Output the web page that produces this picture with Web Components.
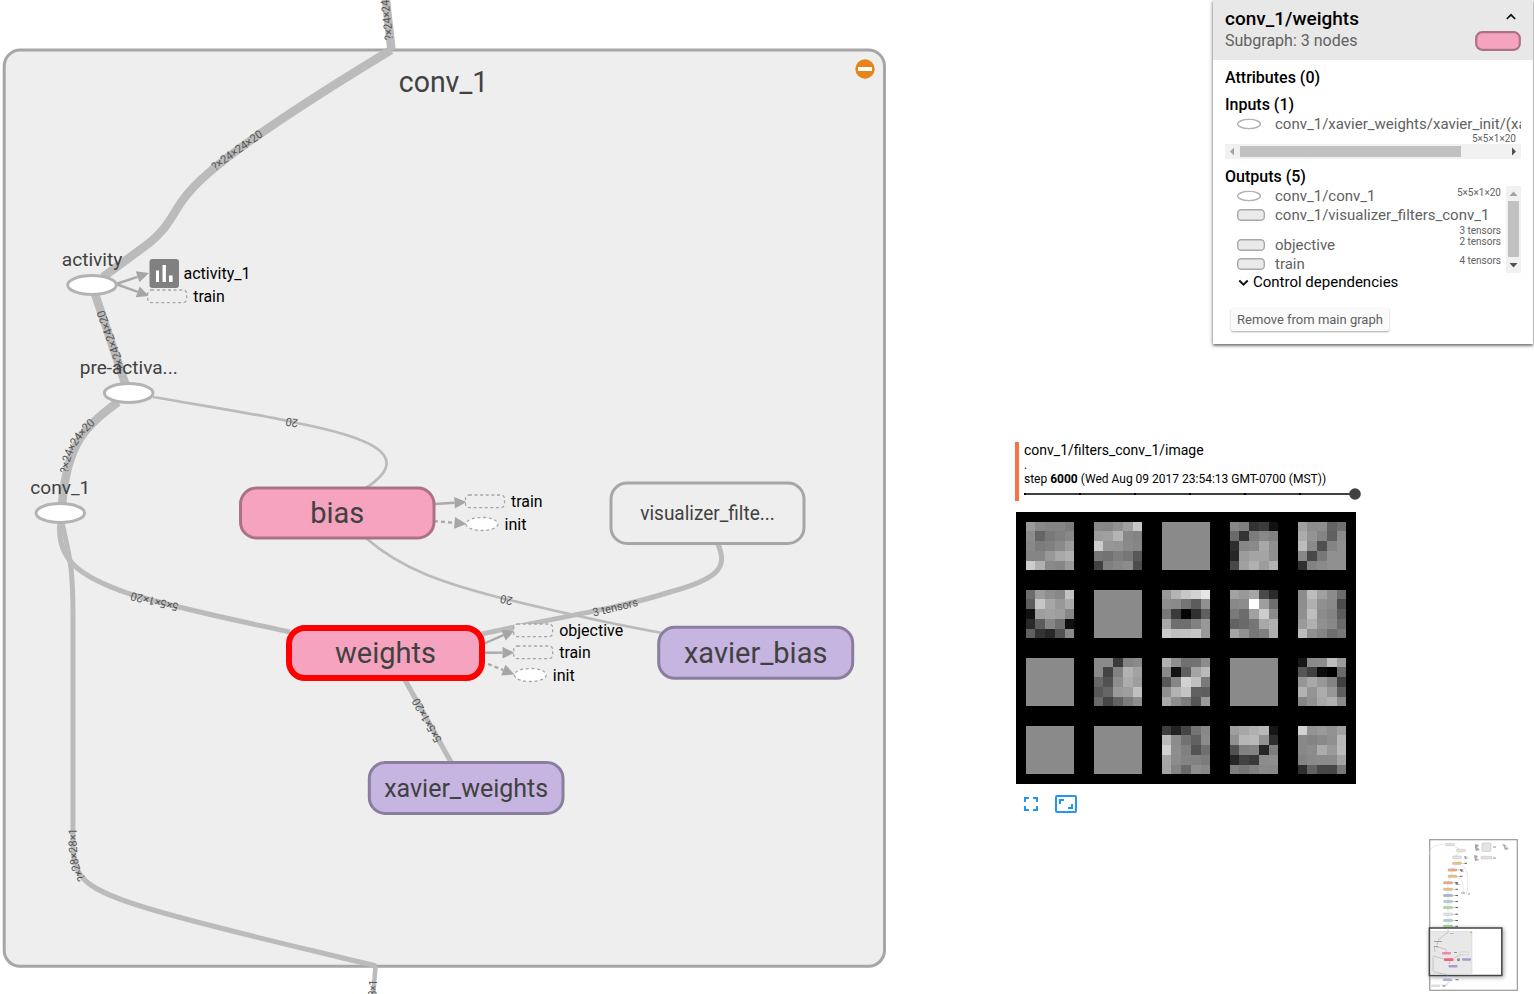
<!DOCTYPE html>
<html lang="en">
<head>
<meta charset="utf-8">
<title>Graph explorer</title>
<style>
html,body{margin:0;height:100%;overflow:hidden;background:#fff}
body{font-family:Roboto,"Liberation Sans",sans-serif;color:#000}
</style>
</head>
<body>
<graph-app></graph-app>
<script>
const define = (name, html) => customElements.define(name, class extends HTMLElement {
  constructor(){ super(); this.attachShadow({mode:'open'}); }
  connectedCallback(){
    if (this.shadowRoot.childNodes.length) return;
    const t = document.createElement('template');
    t.innerHTML = typeof html === 'function' ? html(this) : html;
    this.shadowRoot.append(t.content.cloneNode(true));
  }
});

/* ---------- main graph canvas ---------- */
const fit = len => `textLength="${len}" lengthAdjust="spacingAndGlyphs"`;
const edge = (id, d, w) => `<path id="${id}" class="edge" d="${d}" stroke-width="${w}"/>`;
const op = (x, y, name, ty, len) => `<ellipse class="op" cx="${x}" cy="${y}" rx="24.3" ry="9.5"/><text class="opname" x="${x}" y="${ty}" ${fit(len)}>${name}</text>`;
const group = (x, y, w, h, cls, name, fs, ty, len) => `<rect class="${cls}" x="${x}" y="${y}" width="${w}" height="${h}" rx="16"/><text class="gname" style="font-size:${fs}px" x="${x + w/2}" y="${ty}" ${fit(len)}>${name}</text>`;
const aRect = (x, y, name, len) => `<rect class="anno" x="${x}" y="${y}" width="39" height="12.6" rx="3.5"/><text class="aname" x="${x+45.5}" y="${y+12}" ${fit(len)}>${name}</text>`;
const aOval = (x, y, name, len) => `<ellipse class="anno oval" cx="${x}" cy="${y}" rx="16" ry="6.5"/><text class="aname" x="${x+22.5}" y="${y+6}" ${fit(len)}>${name}</text>`;
const arrow = (x1, y1, x2, y2, dash) => {
  const a = Math.atan2(y2-y1, x2-x1), c = Math.cos(a), s = Math.sin(a), bx = x2-12*c, by = y2-12*s;
  return `<path class="aline" d="M${x1} ${y1}L${bx} ${by}" ${dash ? 'stroke-dasharray="4 3"' : ''}/><path fill="#a6a6a6" d="M${x2} ${y2}L${bx-5.8*s} ${by+5.8*c}L${bx+5.8*s} ${by-5.8*c}Z"/>`;
};
const flow = (id, d, text, len) => `<path id="${id}" d="${d}" fill="none"/><text class="elabel" dy="3.6"><textPath href="#${id}" ${fit(len)}>${text}</textPath></text>`;

define('graph-scene', `
<style>
:host{display:block;width:1000px;height:994px}
svg{display:block}
text{font-family:Roboto,"Liberation Sans",sans-serif}
.edge{fill:none;stroke:#bbb}
.op{fill:#fff;stroke:#b3b3b3;stroke-width:3}
.opname{font-size:19px;fill:#414141;text-anchor:middle}
.gname{fill:#414141;text-anchor:middle}
.pink{fill:#f5a3bf;stroke:#ab7286;stroke-width:3}
.sel{fill:#f5a3bf;stroke:#f00;stroke-width:6}
.violet{fill:#c5b5e0;stroke:#897e9e;stroke-width:3}
.plain{fill:#eee;stroke:#a6a6a6;stroke-width:3}
.anno{fill:#eee;stroke:#a6a6a6;stroke-width:1.3;stroke-dasharray:3 2.6}
.oval{fill:#fff}
.aname{font-size:16px;fill:#000}
.aline{stroke:#aaa;stroke-width:2.4;fill:none}
.elabel{font-size:11.5px;fill:#555}
</style>
<svg width="1000" height="994" viewBox="0 0 1000 994">
<rect x="4.2" y="50" width="880.3" height="916.3" rx="16" fill="#eee" stroke="#a6a6a6" stroke-width="3"/>
${edge('e0','M385.500 -4L391.500 50',8.500)}
${edge('e1','M391 50C310 99 255 135 218 165C166 207 182 216 148 244L103 277',8.500)}
${edge('e2','M95 294L125 383',8.500)}
${edge('e3','M118 402C88 425 67 440 62 505',8.500)}
${edge('e4','M153 397C211 407 268 416 297 423C363 436 418 454 366 488',2.700)}
${edge('e5','M366 538C402 570 447 584 501 598C550 610 600 622 662 633',2.700)}
${edge('e6','M718 544C727 566 722 578 670 592C618 609 548 619 482 634',5)}
${edge('e7','M60 522C56 560 80 577 130 594C180 609 235 620 290 632',5)}
${edge('e8','M62 522C69 557 73 560 73 620L73 840C73 876 79 888 150 909C210 927 290 945 376 966',5)}
${edge('e9','M375.500 966L373 998',4.500)}
${edge('e10','M405 680L451 762',5)}
<text class="gname" style="font-size:29.500px" x="443.500" y="92" ${fit(89.5)}>conv_1</text>
<circle cx="865" cy="69" r="9.700" fill="#e6841a"/><rect x="858" y="67" width="14" height="4" fill="#fff"/>
${flow('t0','M389.500 40L383 -19','?×24×24×20',58)}
${flow('t1','M213 168C229 156 245 145 263 132','?×24×24×20',60)}
${flow('t2','M122 370L99 306','?×24×24×20',63)}
${flow('t3','M64.500 473C67 449 76 437 95 419','?×24×24×20',61)}
${flow('t4','M298 423L280 420','20',12.500)}
${flow('t5','M512.500 601L495 597','20',12.500)}
${flow('t6','M593 613L645 600.500','3 tensors',46)}
${flow('t7','M178.500 607L125 594','5×5×1×20',49)}
${flow('t8','M83 880C74 868 73 862 73 824','?×28×28×1',54)}
${flow('t9','M371.500 1027L373.500 977','?×28×28×1',47)}
${flow('t10','M439 742L412 693','5×5×1×20',49)}
${arrow(116,284,149,273)}${arrow(116,284,149,296)}
${arrow(434,504,466.500,502)}${arrow(434,521,466.500,524,1)}
${arrow(483,644,514.500,630.500)}${arrow(483,652.700,514.500,652.700)}${arrow(488,664,514.500,674.500,1)}
${op(92,285,'activity',266,60.500)}
${op(128.700,393,'pre-activa...',374,98)}
${op(60.300,513,'conv_1',494,60)}
${group(240.500,488,193.500,50,'pink','bias',29,523,54)}
${group(289,628,193,50,'sel','weights',29,663,101)}
${group(611,483,193,60.500,'plain','visualizer_filte...',19.500,520,134.500)}
${group(658.700,627.300,194,51,'violet','xavier_bias',29,663,143.500)}
${group(369.300,762.500,193.700,51,'violet','xavier_weights',26.500,797,164)}
<rect x="149.500" y="259" width="29.500" height="29" rx="3" fill="#808080"/>
<path d="M156 270.500h3V282h-3zM162.500 265h3.400v17h-3.400zM169 275.500h3.600v6.500H169z" fill="#fff"/>
<text class="aname" x="183.500" y="279" ${fit(67)}>activity_1</text>
${aRect(147.700,290,'train',31.500)}
${aRect(465.500,495,'train',31.500)}${aOval(482,524,'init',22)}
${aRect(513.700,624,'objective',64)}${aRect(513.700,646,'train',31.500)}${aOval(530.300,675,'init',22)}
</svg>`);

/* ---------- node details card ---------- */
define('node-glyph', el => `
<style>:host{display:block}svg{display:block}</style>
${el.getAttribute('kind') === 'op'
 ? '<svg width="28" height="12"><ellipse cx="12" cy="6" rx="11.400" ry="4.600" fill="#fff" stroke="#b3b3b3" stroke-width="1.400"/></svg>'
 : '<svg width="28" height="12"><rect x=".7" y=".7" width="26.600" height="10.600" rx="3.600" fill="#eaeaea" stroke="#a8a8a8" stroke-width="1.400"/></svg>'}`);

define('tensor-row', el => `
<style>
:host{display:flex;flex-wrap:wrap;align-items:flex-start;color:#616161;font-size:15px;line-height:19px;padding-left:12px}
node-glyph{margin:3px 10px 0 0;width:28px}
.name{white-space:nowrap}
:host([clip]) .name{width:246px;margin-right:-5px;overflow:hidden}
:host([clip]) .size{margin-top:-1px}
.size{margin-left:auto;font-size:10px;line-height:11px;white-space:nowrap}
</style>
<node-glyph kind="${el.getAttribute('kind')}"></node-glyph><span class="name"><slot></slot></span><span class="size">${el.getAttribute('size')}</span>`);

define('scroll-track', el => {
  const v = el.hasAttribute('vertical');
  return `
<style>
:host{display:flex;box-sizing:border-box;background:#f1f1f1;flex-direction:${v ? 'column' : 'row'};align-items:center;${v ? 'width:15px;height:87px' : 'height:15px;width:296px'}}
svg{flex:none;width:15px;height:15px}
.thumb{background:#c1c1c1;${v ? 'width:11px;height:56px;margin-bottom:auto' : 'height:11px;width:221px;margin-right:auto'}}
</style>
<svg viewBox="0 0 15 15"><path fill="#a3a3a3" d="${v ? 'M3.500 10h8L7.500 5.500z' : 'M9 3.500v8L5 7.500z'}"/></svg>
<div class="thumb"></div>
<svg viewBox="0 0 15 15"><path fill="#505050" d="${v ? 'M3.500 5h8L7.500 9.500z' : 'M6 3.500v8l4-4z'}"/></svg>`;
});

define('node-card', `
<style>
:host{display:block;box-sizing:border-box;width:320px;height:344px;background:#fff;box-shadow:0 1px 4px rgba(0,0,0,.5),0 2px 2px rgba(0,0,0,.25)}
header{display:flex;justify-content:space-between;box-sizing:border-box;height:60px;padding:8px 12px 0;background:#e8e8e8}
h1{margin:0;font-size:19px;line-height:22px;font-weight:500}
header p{margin:0;font-size:16px;line-height:22px;color:#616161}
.side{display:flex;flex-direction:column;align-items:flex-end}
.side svg:first-child{margin:5px 5px 13px 0}
.body{padding:8px 12px 0}
h2{margin:0;font-size:16px;line-height:19px;font-weight:500}
h2+h2{margin-top:8px}
.in{box-sizing:border-box;overflow:hidden;height:30px;padding:1px 5px 0 0;width:296px}
.out-title{margin-top:8px}
.outs{display:flex;height:87px}
.list{flex:1;padding:1px 5px 0 0;overflow:hidden;height:86px}
.ctl{display:flex;align-items:center;height:17px;padding-left:12px;font-size:15px}
.ctl svg{margin:2px 4px 0 1px}
button{display:block;margin:18px 0 0 6px;width:158px;height:23px;padding:0;border:0;border-radius:2px;background:#fafafa;box-shadow:0 1px 2px rgba(0,0,0,.35);font:13px Roboto,"Liberation Sans",sans-serif;color:#616161;white-space:nowrap}
</style>
<header>
 <div><h1>conv_1/weights</h1><p>Subgraph: 3 nodes</p></div>
 <div class="side">
  <svg width="10" height="7"><path d="M.8 6L5 1.800 9.200 6" fill="none" stroke="#111" stroke-width="1.700"/></svg>
  <svg width="46" height="20" style="margin-top:-2px"><rect x="1.200" y="1.200" width="43.600" height="17.600" rx="6" fill="#f5a3bf" stroke="#ab7286" stroke-width="2.200"/></svg>
 </div>
</header>
<div class="body">
 <h2>Attributes (0)</h2>
 <h2>Inputs (1)</h2>
 <div class="in"><tensor-row kind="op" size="5×5×1×20" clip>conv_1/xavier_weights/xavier_init/(xavier</tensor-row></div>
 <scroll-track></scroll-track>
 <h2 class="out-title">Outputs (5)</h2>
 <div class="outs">
  <div class="list">
   <tensor-row kind="op" size="5×5×1×20">conv_1/conv_1</tensor-row>
   <tensor-row kind="group" size="3 tensors">conv_1/visualizer_filters_conv_1</tensor-row>
   <tensor-row kind="group" size="2 tensors">objective</tensor-row>
   <tensor-row kind="group" size="4 tensors">train</tensor-row>
  </div>
  <scroll-track vertical></scroll-track>
 </div>
 <div class="ctl"><svg width="11" height="8"><path d="M1.300 1.500l4.200 4.200 4.200-4.200" fill="none" stroke="#111" stroke-width="1.900"/></svg>Control dependencies</div>
 <button>Remove from main graph</button>
</div>`);

/* ---------- image summary ---------- */
const F = '8a'.repeat(25);
const FILTERS = [
'9a8884847c8c66788088887c808a9c848498a8b0ccb08a869a','888690a0c89ca0b48884cc96948a8676727e76584280868c4c',F,'8880343c126a347c88822e868aa890269ca4a49048a0b09cb2','a08c8e6470ac9484608abc8a508490884878909030828a9090',
'6c9c8e88c25ec6a898aa109ea29e862a5c867010603428528a',F,'98b4c8d2e68e8a745c90783a063060a86e6e8298ccc0c2c698','a298a64a2a888cff9e6e7a6ca0cc8c626a76a8b0a4907680ae','8cbca08c6c8eb0908a4c90be8c845c9ab090886abc90846e78',
F,'8a8a3a848a8a4482b2a268528eac9e58669a9ec06a46627c8e','b28e70728c8a1260a4ba5886d2c07a8eb2c4605eaa8e7c569a',F,'168a8cbe9c56400c006a96a8988440b294ac965e8692a8b08a',
F,F,'3e22467488ba8c72608cd08e805470a68c84827ca4846a8e88','9ea6b0b81690b6b8922e508084267e26423a8c8e7e76808a88','d2949a92a088848a90b8888cac9aba848a8c8ca42e62484678'];
define('filter-tile', el => `
<style>:host{display:grid;grid-template:9px 10px 10px 10px 9px/9px 10px 10px 10px 9px}</style>
${el.getAttribute('cells').match(/../g).map(c => `<i style="background:#${c+c+c}"></i>`).join('')}`);

define('image-summary', `
<style>
:host{display:block;width:345px}
.head{box-sizing:border-box;height:59px;border-left:4px solid #ff7043;padding-left:5px;font-size:12px}
.tag{font-size:14px;line-height:17px}
.run{line-height:12px;font-size:12px}
.step{line-height:16px;white-space:nowrap}
.slider{display:flex;align-items:center;height:12px;margin-top:1px;width:337px}
svg{display:block}
.grid{display:grid;grid-template-columns:repeat(5,48px);gap:20px;background:#000;padding:10px;width:320px;height:252px;margin:11px 0 0 1px}
.tools{display:flex;align-items:center;margin:11px 0 0 9px;gap:17px}
</style>
<div class="head">
 <div class="tag">conv_1/filters_conv_1/image</div>
 <div class="run">.</div>
 <div class="step">step <b>6000</b> (Wed Aug 09 2017 23:54:13 GMT-0700 (MST))</div>
 <div class="slider"><svg width="337" height="12"><rect y="5" width="331" height="2" fill="#404040"/><path d="M0 5h2v2H0zM55 5h2v2h-2zM110 5h2v2h-2zM165 5h2v2h-2zM220 5h2v2h-2zM275 5h2v2h-2z"/><circle cx="331" cy="6" r="5.800" fill="#404040"/></svg></div>
</div>
<div class="grid">${FILTERS.map(f => `<filter-tile cells="${f}"></filter-tile>`).join('')}</div>
<div class="tools">
 <svg width="14" height="14" fill="#2196f3"><path d="M0 0h5v2H2v3H0zM9 0h5v5h-2V2H9zM0 9h2v3h3v2H0zM12 9h2v5H9v-2h3z"/></svg>
 <svg width="22" height="18" fill="#2196f3"><rect x="1" y="1" width="20" height="16" rx="1" fill="none" stroke="#2196f3" stroke-width="2"/><path d="M4 4h5v2H6v3H4zM16 9h2v5h-5v-2h3z"/></svg>
</div>`);

/* ---------- minimap ---------- */
const mm = [['#eac27e',28,24.3],['#eeaa8c',23.500,31],['#eac27e',23.500,37.300],['#eeaa8c',19,43.800],['#eac27e',19,50.300],['#a5b0d4',19,56.500],['#a6d4d4',19,62.500],['#a9dba0',19,68.500],['#e4e4e4',19,75.200],['#a6d4d4',19,81.500],['#a9dba0',19,87.300]];
define('mini-map', `
<style>:host{display:block;width:90px;height:152px}svg{display:block;overflow:visible}</style>
<svg width="90" height="152" viewBox="0 0 90 152">
<defs><filter id="sh" x="-20%" y="-20%" width="150%" height="150%"><feDropShadow dx="1" dy="1" stdDeviation="2" flood-opacity=".4"/></filter></defs>
<rect x=".7" y=".7" width="87.600" height="150.600" fill="#fff" stroke="#999" stroke-width="1.200"/>
<g fill="none" stroke="#ddd" stroke-width=".7"><path d="M17 5C5 6 0 8 1 16"/><path d="M25 7l7 4-5 6 4 6-8 7 0 6-4 6v44"/><path d="M33 27c8 2 6 22 4 29"/><path d="M30 37c6 6 3 14 5 18"/></g>
<g fill="#e4e4e4" stroke="#bbb" stroke-width=".5"><rect x="16.500" y="4.300" width="9" height="2.400" rx="1"/><rect x="27.500" y="10.300" width="9" height="2.400" rx="1"/><rect x="23.500" y="17" width="9" height="2.600" rx="1"/><rect x="53" y="4" width="9" height="8.500" rx="1"/><rect x="52" y="17.300" width="11" height="2.600" rx="1"/></g>
<g fill="#777"><path d="M46 5l4 1-2 3 3 2-4 1-1-3zM45 16l4 1-2 3 4 1-5 1zM73 5l4 1-1 2 4 2-4 1-1-3z" opacity=".65"/><path d="M35 17l4 1-3 1 4 1h-4zM31 30l4 1-3 1 4 1h-4zM26 43l4 1-2 1 4 1h-5z" opacity=".8"/></g>
<g fill="#e89b91"><circle cx="49" cy="9.500" r=".8"/><circle cx="48" cy="20" r=".8"/><circle cx="78" cy="8" r=".7"/></g>
${mm.map(([c,x,y]) => `<path d="M${x-4.500} ${y}h14" stroke="#777" stroke-width=".6" opacity=".6"/><rect x="${x-4.500}" y="${y-1.200}" width="9" height="2.500" rx=".8" fill="${c}" stroke="#999" stroke-width=".25"/><path d="M${x+7.500} ${y}h2.500" stroke="#555" stroke-width=".9"/>`).join('')}
<path d="M64 8h3M64 19h3M32 54h4M39 55h2" stroke="#888" stroke-width=".9"/>
<rect x=".4" y="89" width="72.400" height="47.500" fill="#fff" stroke="#444" stroke-width="1.500" filter="url(#sh)"/>
<rect x="1.500" y="92.500" width="41.500" height="43" fill="#e8e8e8" stroke="#ccc" stroke-width=".5"/>
<g fill="none" stroke="#aaa" stroke-width=".6"><path d="M19 89v4.500C12 98 9 100 8 106M5 107l1 6M4 118v13l1 2 14 3M4 117l11 3M7 108c8 1 12 3 10 5M22 119l-2 6M33 115l-8 4"/></g>
<g fill="#666"><path d="M5 102.200h8v.8H5zM5 107h4v.8H5zM25 113h3v1h-3zM28 119.500h3v2.500h-3zM21 94.200h4v.6h-4z" opacity=".7"/></g>
<rect x="13" y="113" width="9" height="2.600" rx=".8" fill="#e98aaa"/><rect x="15" y="119.200" width="9.500" height="2.800" rx=".8" fill="#f66076"/>
<rect x="33" y="119.200" width="9" height="2.600" rx=".8" fill="#a99ac8"/><rect x="19.500" y="126" width="9" height="2.600" rx=".8" fill="#a99ac8"/><rect x="31" y="113" width="8.500" height="2.600" rx=".8" fill="#eee" stroke="#bbb" stroke-width=".5"/>
<circle cx="42" cy="93.500" r=".7" fill="#e6841a"/>
<path d="M19 137v9M1 146h18M24 141l-8 5" stroke="#ccc" stroke-width=".5"/><path d="M26.500 140.700h3M13.500 147h3" stroke="#555" stroke-width=".9"/>
<rect x="14" y="139.500" width="9" height="2.500" rx=".8" fill="#a5b0d4"/><rect x="2" y="145.700" width="9" height="2.300" rx=".8" fill="#ddd"/>
</svg>`);

define('graph-app', `
<style>
:host{display:grid;grid-template-columns:1000px 1fr;height:994px}
aside{display:flex;flex-direction:column}
node-card{align-self:flex-end;margin-right:1px}
image-summary{margin:98px 0 0 15px}
mini-map{align-self:flex-end;margin:auto 15px 3px 0}
</style>
<graph-scene></graph-scene>
<aside><node-card></node-card><image-summary></image-summary><mini-map></mini-map></aside>`);
</script>
</body>
</html>
